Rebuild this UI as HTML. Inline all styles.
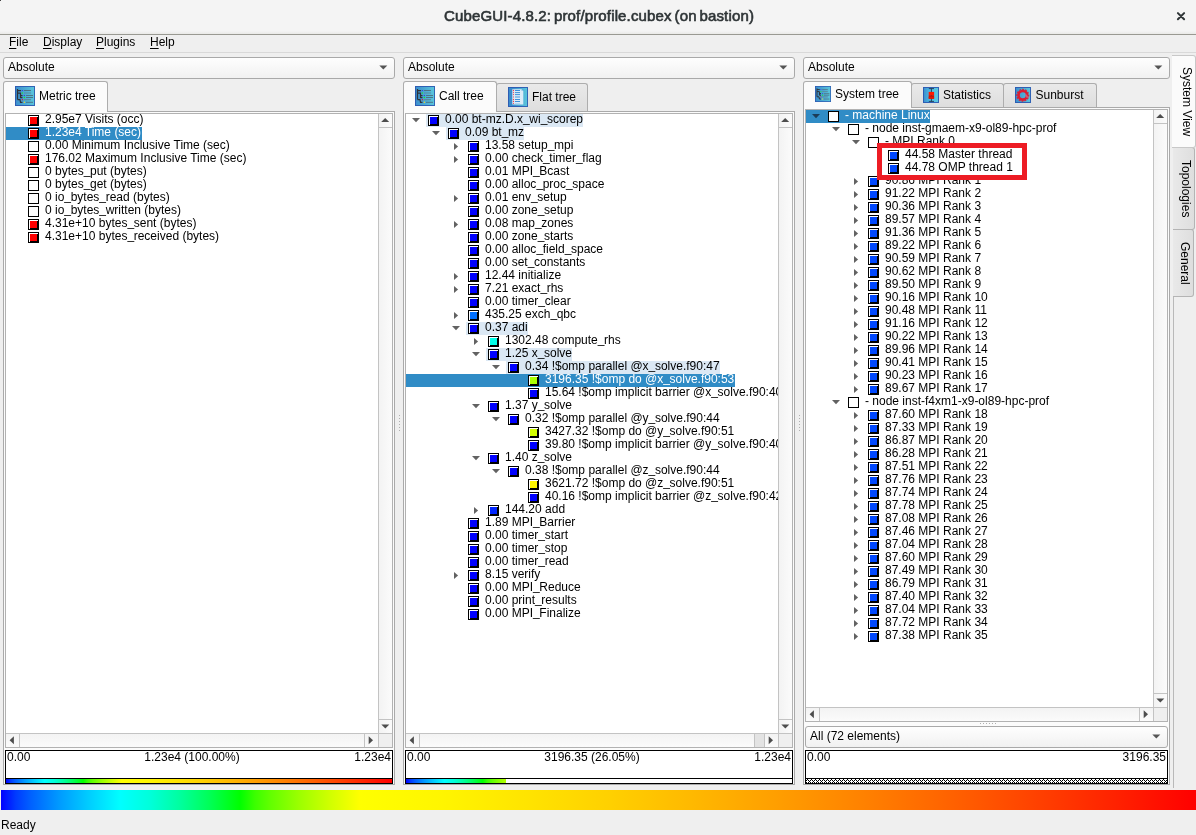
<!DOCTYPE html>
<html><head><meta charset="utf-8"><title>CubeGUI-4.8.2: prof/profile.cubex (on bastion)</title>
<style>
html,body{margin:0;padding:0}
body{width:1196px;height:835px;background:#efefef;font:12px/13px "Liberation Sans",sans-serif;color:#000;overflow:hidden;position:relative}
div,span,i,b,svg{position:absolute;box-sizing:border-box}
i,b{display:block;font-style:normal}
#titlebar{left:0;top:0;width:1196px;height:34px;background:linear-gradient(#f4f4f4 0,#f4f4f4 31px,#e9e9e7 34px)}
#titleline{left:0;top:34px;width:1196px;height:1px;background:#999992}
#title{left:1px;top:6px;width:1196px;text-align:center;font:15px/20px "Liberation Sans",sans-serif;color:#2e3436;letter-spacing:0.15px;word-spacing:-1.5px;-webkit-text-stroke:0.6px #2e3436}
#menuline{left:0;top:52px;width:1196px;height:1px;background:#d9d9d9}
.mi{top:36px;white-space:nowrap}
.mi u{text-decoration:underline;text-underline-offset:2px;text-decoration-thickness:1px}
.combo{height:22px;border:1px solid #a9a9a9;border-radius:3px;background:linear-gradient(#fefefe,#f1f1f1)}
.combo span{left:4px;top:3px;white-space:nowrap}
.combo svg{right:6px;top:7.4px}
.pane{border:1px solid #aaaaaa;background:#fbfbfb}
.frame{border:1px solid #b2b2b2;background:#fff}
.tab{border:1px solid #adadad;border-bottom:none;border-radius:3px 3px 0 0;white-space:nowrap}
.tab.on{background:#fbfbfb}
.tab.off{background:linear-gradient(#e9e9e9,#dedede)}
.tab span{white-space:nowrap}
.vw{border:1px solid #000;background:#fff}
.vw span{top:0px;white-space:nowrap}
.bx{width:11px;height:11px;border:1px solid #000;background:linear-gradient(#fff,#fff) 0 0/9px 1px no-repeat,linear-gradient(#fff,#fff) 0 0/1px 9px no-repeat,#000}
.bx.w{background:#fff}
.bx b{left:1px;top:1px;width:7px;height:7px}
.t{white-space:nowrap;height:13px;line-height:13px;padding:0 1px}
.t em{font-style:normal;position:relative;top:-1px}
.t.sel{background:#308cc6;color:#fff}
.t.hl{background:#dbe8f4}
.selrow{height:13px;background:#308cc6}
.hlrow{height:13px;background:#dbe8f4}
.view{overflow:hidden}
.sbv{background:linear-gradient(90deg,#f3f3f3,#fbfbfb);border-left:1px solid #c3c3c3}
.sbh{background:linear-gradient(#f3f3f3,#fbfbfb);border-top:1px solid #c3c3c3}
.ln{background:#c3c3c3}
.stab{border:1px solid #b4b4b4;border-left:none;border-radius:0 3px 3px 0}
.stab.on{background:#fbfbfb;border-color:#c8c8c8}
.stab.off{background:linear-gradient(90deg,#e9e9e9,#dedede)}
.vt{white-space:nowrap;transform-origin:0 0;transform:rotate(90deg);line-height:13px}
.dot{width:1px;height:1px;background:#b0b0b0}
#root{left:0;top:0;width:1196px;height:835px;will-change:transform}
s{text-decoration:none;position:relative;top:-1px;margin-right:-0.4px}
</style></head><body><div id="root">
<div id="titlebar"></div><i style="left:0;top:0;width:1px;height:1px;background:#444"></i><div id="titleline"></div>
<div id="title">CubeGUI-4.8.2: prof/profile.cubex (on bastion)</div>
<svg style="left:1176px;top:11px" width="10" height="10" viewBox="0 0 10 10"><path d="M1.9 2.1 L8.1 8.3 M8.1 2.1 L1.9 8.3" stroke="#2e3436" stroke-width="2" stroke-linecap="round"/></svg>
<div id="menuline"></div>
<span class="mi" style="left:9px"><u>F</u>ile</span>
<span class="mi" style="left:43px"><u>D</u>isplay</span>
<span class="mi" style="left:96px"><u>P</u>lugins</span>
<span class="mi" style="left:150px"><u>H</u>elp</span>

<!-- PANEL 1 -->
<div class="combo" style="left:3px;top:57px;width:392px"><span>Absolute</span><svg width="9" height="6" viewBox="0 0 9 6"><path d="M0.3 0.6 L8.3 0.6 L4.3 4.6 Z" fill="#555"/></svg></div>
<div class="pane" style="left:3px;top:111px;width:392px;height:674px"></div>
<div class="tab on" style="left:3px;top:81px;width:105px;height:31px"><span style="left:35px;top:8px">Metric tree</span></div>
<div class="frame" style="left:5px;top:113px;width:388px;height:635px"></div>
<div class="view" style="left:6px;top:114px;width:372px;height:619px"><div style="left:-6px;top:-114px">
<i class="bx" style="left:28px;top:115px"><b style="background:#ff0000"></b></i>
<span class="t" style="left:44px;top:114px;padding-right:1px"><em>2.95e7 Visits (occ)</em></span>
<div class="selrow" style="left:6px;top:127px;width:39px"></div>
<i class="bx" style="left:28px;top:128px"><b style="background:#ff0000"></b></i>
<span class="t sel" style="left:44px;top:127px;padding-right:1px"><em>1.23e4 Time (sec)</em></span>
<i class="bx w" style="left:28px;top:141px"></i>
<span class="t" style="left:44px;top:140px;padding-right:1px"><em>0.00 Minimum Inclusive Time (sec)</em></span>
<i class="bx" style="left:28px;top:154px"><b style="background:#ff0000"></b></i>
<span class="t" style="left:44px;top:153px;padding-right:1px"><em>176.02 Maximum Inclusive Time (sec)</em></span>
<i class="bx w" style="left:28px;top:167px"></i>
<span class="t" style="left:44px;top:166px;padding-right:1px"><em>0 bytes<s>_</s>put (bytes)</em></span>
<i class="bx w" style="left:28px;top:180px"></i>
<span class="t" style="left:44px;top:179px;padding-right:1px"><em>0 bytes<s>_</s>get (bytes)</em></span>
<i class="bx w" style="left:28px;top:193px"></i>
<span class="t" style="left:44px;top:192px;padding-right:1px"><em>0 io<s>_</s>bytes<s>_</s>read (bytes)</em></span>
<i class="bx w" style="left:28px;top:206px"></i>
<span class="t" style="left:44px;top:205px;padding-right:1px"><em>0 io<s>_</s>bytes<s>_</s>written (bytes)</em></span>
<i class="bx" style="left:28px;top:219px"><b style="background:#ff0000"></b></i>
<span class="t" style="left:44px;top:218px;padding-right:1px"><em>4.31e+10 bytes<s>_</s>sent (bytes)</em></span>
<i class="bx" style="left:28px;top:232px"><b style="background:#ff0000"></b></i>
<span class="t" style="left:44px;top:231px;padding-right:1px"><em>4.31e+10 bytes<s>_</s>received (bytes)</em></span>
</div></div>
<div class="sbv" style="left:378px;top:114px;width:14px;height:619px"></div>
<div class="ln" style="left:379px;top:127px;width:13px;height:1px"></div>
<div class="ln" style="left:379px;top:719px;width:13px;height:1px"></div>
<svg style="left:381px;top:117px" width="9" height="6" viewBox="0 0 9 6"><path d="M0.2 4.9 L8.2 4.9 L4.2 0.9 Z" fill="#4d4d4d"/></svg>
<svg style="left:381px;top:723.5px" width="9" height="6" viewBox="0 0 9 6"><path d="M0.3 0.6 L8.3 0.6 L4.3 4.6 Z" fill="#4d4d4d"/></svg>
<div class="sbh" style="left:6px;top:733px;width:372px;height:14px"></div>
<div class="ln" style="left:19px;top:734px;width:1px;height:13px"></div>
<div class="ln" style="left:364px;top:734px;width:1px;height:13px"></div>
<svg style="left:9.3px;top:736px" width="6" height="9" viewBox="0 0 6 9"><path d="M4.9 0.3 L4.9 8.3 L0.6 4.3 Z" fill="#4d4d4d"/></svg>
<svg style="left:368px;top:736px" width="6" height="9" viewBox="0 0 6 9"><path d="M0.7 0.3 L0.7 8.3 L5 4.3 Z" fill="#4d4d4d"/></svg>
<div style="left:378px;top:733px;width:14px;height:14px;background:#efefef;border-left:1px solid #c3c3c3;border-top:1px solid #c3c3c3"></div>
<div class="vw" style="left:5px;top:750px;width:388px;height:34px"><span style="left:1px">0.00</span><span style="left:-7px;width:386px;text-align:center">1.23e4 (100.00%)</span><span style="right:1px">1.23e4</span>
<div style="left:0;top:27px;width:386px;height:1px;background:#000"></div>
<div style="left:0;top:28px;width:386px;height:4px;background:linear-gradient(90deg,#0000ff 0.00%,#003bff 1.25%,#0061ff 2.50%,#009dff 5.00%,#00d0ff 7.50%,#00ffff 10.00%,#00ffda 12.50%,#00ff9e 15.00%,#00ff55 17.50%,#00ff00 20.00%,#3bff00 21.25%,#61ff00 22.50%,#9dff00 25.00%,#d0ff00 27.50%,#ffff00 30.00%,#fff500 37.00%,#ffe400 44.00%,#ffd000 51.00%,#ffb800 58.00%,#ff9e00 65.00%,#ff8200 72.00%,#ff6400 79.00%,#ff4400 86.00%,#ff2300 93.00%,#ff0000 100.00%)"></div></div>

<!-- PANEL 2 -->
<div class="combo" style="left:403px;top:57px;width:392px"><span>Absolute</span><svg width="9" height="6" viewBox="0 0 9 6"><path d="M0.3 0.6 L8.3 0.6 L4.3 4.6 Z" fill="#555"/></svg></div>
<div class="pane" style="left:403px;top:111px;width:392px;height:674px"></div>
<div class="tab off" style="left:496px;top:83px;width:92px;height:28px"><span style="left:35px;top:7px">Flat tree</span></div>
<div class="tab on" style="left:403px;top:81px;width:94px;height:31px"><span style="left:35px;top:8px">Call tree</span></div>
<div class="frame" style="left:405px;top:113px;width:388px;height:635px"></div>
<div class="view" style="left:406px;top:114px;width:372px;height:619px"><div style="left:-406px;top:-114px">
<div class="hlrow" style="left:426px;top:114px;width:18px"></div>
<svg class="ar" style="left:412px;top:118px" width="9" height="6" viewBox="0 0 9 6"><path d="M0 0.1 L8 0.1 L4 4.2 Z" fill="#626262"/></svg>
<i class="bx" style="left:428px;top:115px"><b style="background:#0000ff"></b></i>
<span class="t hl" style="left:444px;top:114px;padding-right:0px"><em>0.00 bt-mz.D.x<s>_</s>wi<s>_</s>scorep</em></span>
<div class="hlrow" style="left:446px;top:127px;width:18px"></div>
<svg class="ar" style="left:432px;top:131px" width="9" height="6" viewBox="0 0 9 6"><path d="M0 0.1 L8 0.1 L4 4.2 Z" fill="#626262"/></svg>
<i class="bx" style="left:448px;top:128px"><b style="background:#0000ff"></b></i>
<span class="t hl" style="left:464px;top:127px;padding-right:0px"><em>0.09 bt<s>_</s>mz</em></span>
<svg class="ar" style="left:454px;top:142px" width="6" height="9" viewBox="0 0 6 9"><path d="M0 0.9 L0 8.1 L4.1 4.5 Z" fill="#626262"/></svg>
<i class="bx" style="left:468px;top:141px"><b style="background:#0000ff"></b></i>
<span class="t" style="left:484px;top:140px;padding-right:0px"><em>13.58 setup<s>_</s>mpi</em></span>
<svg class="ar" style="left:454px;top:155px" width="6" height="9" viewBox="0 0 6 9"><path d="M0 0.9 L0 8.1 L4.1 4.5 Z" fill="#626262"/></svg>
<i class="bx" style="left:468px;top:154px"><b style="background:#0000ff"></b></i>
<span class="t" style="left:484px;top:153px;padding-right:0px"><em>0.00 check<s>_</s>timer<s>_</s>flag</em></span>
<i class="bx" style="left:468px;top:167px"><b style="background:#0000ff"></b></i>
<span class="t" style="left:484px;top:166px;padding-right:0px"><em>0.01 MPI<s>_</s>Bcast</em></span>
<i class="bx" style="left:468px;top:180px"><b style="background:#0000ff"></b></i>
<span class="t" style="left:484px;top:179px;padding-right:0px"><em>0.00 alloc<s>_</s>proc<s>_</s>space</em></span>
<svg class="ar" style="left:454px;top:194px" width="6" height="9" viewBox="0 0 6 9"><path d="M0 0.9 L0 8.1 L4.1 4.5 Z" fill="#626262"/></svg>
<i class="bx" style="left:468px;top:193px"><b style="background:#0000ff"></b></i>
<span class="t" style="left:484px;top:192px;padding-right:0px"><em>0.01 env<s>_</s>setup</em></span>
<i class="bx" style="left:468px;top:206px"><b style="background:#0000ff"></b></i>
<span class="t" style="left:484px;top:205px;padding-right:0px"><em>0.00 zone<s>_</s>setup</em></span>
<svg class="ar" style="left:454px;top:220px" width="6" height="9" viewBox="0 0 6 9"><path d="M0 0.9 L0 8.1 L4.1 4.5 Z" fill="#626262"/></svg>
<i class="bx" style="left:468px;top:219px"><b style="background:#0000ff"></b></i>
<span class="t" style="left:484px;top:218px;padding-right:0px"><em>0.08 map<s>_</s>zones</em></span>
<i class="bx" style="left:468px;top:232px"><b style="background:#0000ff"></b></i>
<span class="t" style="left:484px;top:231px;padding-right:0px"><em>0.00 zone<s>_</s>starts</em></span>
<i class="bx" style="left:468px;top:245px"><b style="background:#0000ff"></b></i>
<span class="t" style="left:484px;top:244px;padding-right:0px"><em>0.00 alloc<s>_</s>field<s>_</s>space</em></span>
<i class="bx" style="left:468px;top:258px"><b style="background:#0000ff"></b></i>
<span class="t" style="left:484px;top:257px;padding-right:0px"><em>0.00 set<s>_</s>constants</em></span>
<svg class="ar" style="left:454px;top:272px" width="6" height="9" viewBox="0 0 6 9"><path d="M0 0.9 L0 8.1 L4.1 4.5 Z" fill="#626262"/></svg>
<i class="bx" style="left:468px;top:271px"><b style="background:#0000ff"></b></i>
<span class="t" style="left:484px;top:270px;padding-right:0px"><em>12.44 initialize</em></span>
<svg class="ar" style="left:454px;top:285px" width="6" height="9" viewBox="0 0 6 9"><path d="M0 0.9 L0 8.1 L4.1 4.5 Z" fill="#626262"/></svg>
<i class="bx" style="left:468px;top:284px"><b style="background:#0000ff"></b></i>
<span class="t" style="left:484px;top:283px;padding-right:0px"><em>7.21 exact<s>_</s>rhs</em></span>
<i class="bx" style="left:468px;top:297px"><b style="background:#0000ff"></b></i>
<span class="t" style="left:484px;top:296px;padding-right:0px"><em>0.00 timer<s>_</s>clear</em></span>
<svg class="ar" style="left:454px;top:311px" width="6" height="9" viewBox="0 0 6 9"><path d="M0 0.9 L0 8.1 L4.1 4.5 Z" fill="#626262"/></svg>
<i class="bx" style="left:468px;top:310px"><b style="background:#0070ff"></b></i>
<span class="t" style="left:484px;top:309px;padding-right:0px"><em>435.25 exch<s>_</s>qbc</em></span>
<div class="hlrow" style="left:466px;top:322px;width:18px"></div>
<svg class="ar" style="left:452px;top:326px" width="9" height="6" viewBox="0 0 9 6"><path d="M0 0.1 L8 0.1 L4 4.2 Z" fill="#626262"/></svg>
<i class="bx" style="left:468px;top:323px"><b style="background:#0000ff"></b></i>
<span class="t hl" style="left:484px;top:322px;padding-right:0px"><em>0.37 adi</em></span>
<svg class="ar" style="left:474px;top:337px" width="6" height="9" viewBox="0 0 6 9"><path d="M0 0.9 L0 8.1 L4.1 4.5 Z" fill="#626262"/></svg>
<i class="bx" style="left:488px;top:336px"><b style="background:#00ffea"></b></i>
<span class="t" style="left:504px;top:335px;padding-right:0px"><em>1302.48 compute<s>_</s>rhs</em></span>
<div class="hlrow" style="left:486px;top:348px;width:18px"></div>
<svg class="ar" style="left:472px;top:352px" width="9" height="6" viewBox="0 0 9 6"><path d="M0 0.1 L8 0.1 L4 4.2 Z" fill="#626262"/></svg>
<i class="bx" style="left:488px;top:349px"><b style="background:#0000ff"></b></i>
<span class="t hl" style="left:504px;top:348px;padding-right:0px"><em>1.25 x<s>_</s>solve</em></span>
<div class="hlrow" style="left:506px;top:361px;width:18px"></div>
<svg class="ar" style="left:492px;top:365px" width="9" height="6" viewBox="0 0 9 6"><path d="M0 0.1 L8 0.1 L4 4.2 Z" fill="#626262"/></svg>
<i class="bx" style="left:508px;top:362px"><b style="background:#0000ff"></b></i>
<span class="t hl" style="left:524px;top:361px;padding-right:0px"><em>0.34 !$omp parallel @x<s>_</s>solve.f90:47</em></span>
<div class="selrow" style="left:406px;top:374px;width:139px"></div>
<i class="bx" style="left:528px;top:375px"><b style="background:#aaff00"></b></i>
<span class="t sel" style="left:544px;top:374px;padding-right:1px"><em>3196.35 !$omp do @x<s>_</s>solve.f90:53</em></span>
<i class="bx" style="left:528px;top:388px"><b style="background:#0000ff"></b></i>
<span class="t" style="left:544px;top:387px;padding-right:0px"><em>15.64 !$omp implicit barrier @x<s>_</s>solve.f90:40</em></span>
<svg class="ar" style="left:472px;top:404px" width="9" height="6" viewBox="0 0 9 6"><path d="M0 0.1 L8 0.1 L4 4.2 Z" fill="#626262"/></svg>
<i class="bx" style="left:488px;top:401px"><b style="background:#0000ff"></b></i>
<span class="t" style="left:504px;top:400px;padding-right:0px"><em>1.37 y<s>_</s>solve</em></span>
<svg class="ar" style="left:492px;top:417px" width="9" height="6" viewBox="0 0 9 6"><path d="M0 0.1 L8 0.1 L4 4.2 Z" fill="#626262"/></svg>
<i class="bx" style="left:508px;top:414px"><b style="background:#0000ff"></b></i>
<span class="t" style="left:524px;top:413px;padding-right:0px"><em>0.32 !$omp parallel @y<s>_</s>solve.f90:44</em></span>
<i class="bx" style="left:528px;top:427px"><b style="background:#d4ff00"></b></i>
<span class="t" style="left:544px;top:426px;padding-right:0px"><em>3427.32 !$omp do @y<s>_</s>solve.f90:51</em></span>
<i class="bx" style="left:528px;top:440px"><b style="background:#0000ff"></b></i>
<span class="t" style="left:544px;top:439px;padding-right:0px"><em>39.80 !$omp implicit barrier @y<s>_</s>solve.f90:40</em></span>
<svg class="ar" style="left:472px;top:456px" width="9" height="6" viewBox="0 0 9 6"><path d="M0 0.1 L8 0.1 L4 4.2 Z" fill="#626262"/></svg>
<i class="bx" style="left:488px;top:453px"><b style="background:#0000ff"></b></i>
<span class="t" style="left:504px;top:452px;padding-right:0px"><em>1.40 z<s>_</s>solve</em></span>
<svg class="ar" style="left:492px;top:469px" width="9" height="6" viewBox="0 0 9 6"><path d="M0 0.1 L8 0.1 L4 4.2 Z" fill="#626262"/></svg>
<i class="bx" style="left:508px;top:466px"><b style="background:#0000ff"></b></i>
<span class="t" style="left:524px;top:465px;padding-right:0px"><em>0.38 !$omp parallel @z<s>_</s>solve.f90:44</em></span>
<i class="bx" style="left:528px;top:479px"><b style="background:#fff700"></b></i>
<span class="t" style="left:544px;top:478px;padding-right:0px"><em>3621.72 !$omp do @z<s>_</s>solve.f90:51</em></span>
<i class="bx" style="left:528px;top:492px"><b style="background:#0000ff"></b></i>
<span class="t" style="left:544px;top:491px;padding-right:0px"><em>40.16 !$omp implicit barrier @z<s>_</s>solve.f90:42</em></span>
<svg class="ar" style="left:474px;top:506px" width="6" height="9" viewBox="0 0 6 9"><path d="M0 0.9 L0 8.1 L4.1 4.5 Z" fill="#626262"/></svg>
<i class="bx" style="left:488px;top:505px"><b style="background:#0025ff"></b></i>
<span class="t" style="left:504px;top:504px;padding-right:0px"><em>144.20 add</em></span>
<i class="bx" style="left:468px;top:518px"><b style="background:#0000ff"></b></i>
<span class="t" style="left:484px;top:517px;padding-right:0px"><em>1.89 MPI<s>_</s>Barrier</em></span>
<i class="bx" style="left:468px;top:531px"><b style="background:#0000ff"></b></i>
<span class="t" style="left:484px;top:530px;padding-right:0px"><em>0.00 timer<s>_</s>start</em></span>
<i class="bx" style="left:468px;top:544px"><b style="background:#0000ff"></b></i>
<span class="t" style="left:484px;top:543px;padding-right:0px"><em>0.00 timer<s>_</s>stop</em></span>
<i class="bx" style="left:468px;top:557px"><b style="background:#0000ff"></b></i>
<span class="t" style="left:484px;top:556px;padding-right:0px"><em>0.00 timer<s>_</s>read</em></span>
<svg class="ar" style="left:454px;top:571px" width="6" height="9" viewBox="0 0 6 9"><path d="M0 0.9 L0 8.1 L4.1 4.5 Z" fill="#626262"/></svg>
<i class="bx" style="left:468px;top:570px"><b style="background:#0000ff"></b></i>
<span class="t" style="left:484px;top:569px;padding-right:0px"><em>8.15 verify</em></span>
<i class="bx" style="left:468px;top:583px"><b style="background:#0000ff"></b></i>
<span class="t" style="left:484px;top:582px;padding-right:0px"><em>0.00 MPI<s>_</s>Reduce</em></span>
<i class="bx" style="left:468px;top:596px"><b style="background:#0000ff"></b></i>
<span class="t" style="left:484px;top:595px;padding-right:0px"><em>0.00 print<s>_</s>results</em></span>
<i class="bx" style="left:468px;top:609px"><b style="background:#0000ff"></b></i>
<span class="t" style="left:484px;top:608px;padding-right:0px"><em>0.00 MPI<s>_</s>Finalize</em></span>
</div></div>
<div class="sbv" style="left:778px;top:114px;width:14px;height:619px"></div>
<div class="ln" style="left:779px;top:127px;width:13px;height:1px"></div>
<div class="ln" style="left:779px;top:719px;width:13px;height:1px"></div>
<svg style="left:781px;top:117px" width="9" height="6" viewBox="0 0 9 6"><path d="M0.2 4.9 L8.2 4.9 L4.2 0.9 Z" fill="#4d4d4d"/></svg>
<svg style="left:781px;top:723.5px" width="9" height="6" viewBox="0 0 9 6"><path d="M0.3 0.6 L8.3 0.6 L4.3 4.6 Z" fill="#4d4d4d"/></svg>
<div class="sbh" style="left:406px;top:733px;width:372px;height:14px"></div>
<div class="ln" style="left:419px;top:734px;width:1px;height:13px"></div>
<div class="ln" style="left:764px;top:734px;width:1px;height:13px"></div>
<div style="left:754px;top:734px;width:10px;height:13px;background:#e3e3e3;border-left:1px solid #c3c3c3"></div>
<svg style="left:409.3px;top:736px" width="6" height="9" viewBox="0 0 6 9"><path d="M4.9 0.3 L4.9 8.3 L0.6 4.3 Z" fill="#4d4d4d"/></svg>
<svg style="left:768px;top:736px" width="6" height="9" viewBox="0 0 6 9"><path d="M0.7 0.3 L0.7 8.3 L5 4.3 Z" fill="#4d4d4d"/></svg>
<div style="left:778px;top:733px;width:14px;height:14px;background:#efefef;border-left:1px solid #c3c3c3;border-top:1px solid #c3c3c3"></div>
<div class="vw" style="left:405px;top:750px;width:388px;height:34px"><span style="left:1px">0.00</span><span style="left:-7px;width:386px;text-align:center">3196.35 (26.05%)</span><span style="right:1px">1.23e4</span>
<div style="left:0;top:27px;width:386px;height:1px;background:#000"></div>
<div style="left:0;top:28px;width:100px;height:4px;background:linear-gradient(90deg,#0000ff 0.00%,#003bff 4.80%,#0061ff 9.60%,#009dff 19.19%,#00d0ff 28.79%,#00ffff 38.39%,#00ffda 47.98%,#00ff9e 57.58%,#00ff55 67.18%,#00ff00 76.78%,#3bff00 81.57%,#61ff00 86.37%,#9dff00 95.97%,#b3ff00 100.00%)"></div></div>

<!-- PANEL 3 -->
<div class="combo" style="left:803px;top:57px;width:367px"><span>Absolute</span><svg width="9" height="6" viewBox="0 0 9 6"><path d="M0.3 0.6 L8.3 0.6 L4.3 4.6 Z" fill="#555"/></svg></div>
<div class="pane" style="left:803px;top:107px;width:367px;height:678px"></div>
<div class="tab off" style="left:911px;top:83px;width:93px;height:24px"><span style="left:31px;top:5px">Statistics</span></div>
<div class="tab off" style="left:1003px;top:83px;width:94px;height:24px"><span style="left:31.5px;top:5px">Sunburst</span></div>
<div class="tab on" style="left:803px;top:81px;width:109px;height:27px"><span style="left:31px;top:6px">System tree</span></div>
<div class="frame" style="left:805px;top:109px;width:363px;height:613px"></div>
<div class="view" style="left:806px;top:110px;width:347px;height:597px"><div style="left:-806px;top:-110px">
<div class="selrow" style="left:806px;top:110px;width:39px"></div>
<svg class="ar" style="left:812px;top:114px" width="9" height="6" viewBox="0 0 9 6"><path d="M0 0.1 L8 0.1 L4 4.2 Z" fill="#1c3c58"/></svg>
<i class="bx w" style="left:828px;top:111px"></i>
<span class="t sel" style="left:844px;top:110px;padding-right:0px"><em>- machine Linux</em></span>
<svg class="ar" style="left:832px;top:127px" width="9" height="6" viewBox="0 0 9 6"><path d="M0 0.1 L8 0.1 L4 4.2 Z" fill="#626262"/></svg>
<i class="bx w" style="left:848px;top:124px"></i>
<span class="t" style="left:864px;top:123px;padding-right:0px"><em>- node inst-gmaem-x9-ol89-hpc-prof</em></span>
<svg class="ar" style="left:852px;top:140px" width="9" height="6" viewBox="0 0 9 6"><path d="M0 0.1 L8 0.1 L4 4.2 Z" fill="#626262"/></svg>
<i class="bx w" style="left:868px;top:137px"></i>
<span class="t" style="left:884px;top:136px;padding-right:0px"><em>- MPI Rank 0</em></span>
<i class="bx" style="left:888px;top:150px"><b style="background:#0048ff"></b></i>
<span class="t" style="left:904px;top:149px;padding-right:0px"><em>44.58 Master thread</em></span>
<i class="bx" style="left:888px;top:163px"><b style="background:#0048ff"></b></i>
<span class="t" style="left:904px;top:162px;padding-right:0px"><em>44.78 OMP thread 1</em></span>
<svg class="ar" style="left:854px;top:177px" width="6" height="9" viewBox="0 0 6 9"><path d="M0 0.9 L0 8.1 L4.1 4.5 Z" fill="#626262"/></svg>
<i class="bx" style="left:868px;top:176px"><b style="background:#0048ff"></b></i>
<span class="t" style="left:884px;top:175px;padding-right:0px"><em>90.86 MPI Rank 1</em></span>
<svg class="ar" style="left:854px;top:190px" width="6" height="9" viewBox="0 0 6 9"><path d="M0 0.9 L0 8.1 L4.1 4.5 Z" fill="#626262"/></svg>
<i class="bx" style="left:868px;top:189px"><b style="background:#0048ff"></b></i>
<span class="t" style="left:884px;top:188px;padding-right:0px"><em>91.22 MPI Rank 2</em></span>
<svg class="ar" style="left:854px;top:203px" width="6" height="9" viewBox="0 0 6 9"><path d="M0 0.9 L0 8.1 L4.1 4.5 Z" fill="#626262"/></svg>
<i class="bx" style="left:868px;top:202px"><b style="background:#0048ff"></b></i>
<span class="t" style="left:884px;top:201px;padding-right:0px"><em>90.36 MPI Rank 3</em></span>
<svg class="ar" style="left:854px;top:216px" width="6" height="9" viewBox="0 0 6 9"><path d="M0 0.9 L0 8.1 L4.1 4.5 Z" fill="#626262"/></svg>
<i class="bx" style="left:868px;top:215px"><b style="background:#0048ff"></b></i>
<span class="t" style="left:884px;top:214px;padding-right:0px"><em>89.57 MPI Rank 4</em></span>
<svg class="ar" style="left:854px;top:229px" width="6" height="9" viewBox="0 0 6 9"><path d="M0 0.9 L0 8.1 L4.1 4.5 Z" fill="#626262"/></svg>
<i class="bx" style="left:868px;top:228px"><b style="background:#0048ff"></b></i>
<span class="t" style="left:884px;top:227px;padding-right:0px"><em>91.36 MPI Rank 5</em></span>
<svg class="ar" style="left:854px;top:242px" width="6" height="9" viewBox="0 0 6 9"><path d="M0 0.9 L0 8.1 L4.1 4.5 Z" fill="#626262"/></svg>
<i class="bx" style="left:868px;top:241px"><b style="background:#0048ff"></b></i>
<span class="t" style="left:884px;top:240px;padding-right:0px"><em>89.22 MPI Rank 6</em></span>
<svg class="ar" style="left:854px;top:255px" width="6" height="9" viewBox="0 0 6 9"><path d="M0 0.9 L0 8.1 L4.1 4.5 Z" fill="#626262"/></svg>
<i class="bx" style="left:868px;top:254px"><b style="background:#0048ff"></b></i>
<span class="t" style="left:884px;top:253px;padding-right:0px"><em>90.59 MPI Rank 7</em></span>
<svg class="ar" style="left:854px;top:268px" width="6" height="9" viewBox="0 0 6 9"><path d="M0 0.9 L0 8.1 L4.1 4.5 Z" fill="#626262"/></svg>
<i class="bx" style="left:868px;top:267px"><b style="background:#0048ff"></b></i>
<span class="t" style="left:884px;top:266px;padding-right:0px"><em>90.62 MPI Rank 8</em></span>
<svg class="ar" style="left:854px;top:281px" width="6" height="9" viewBox="0 0 6 9"><path d="M0 0.9 L0 8.1 L4.1 4.5 Z" fill="#626262"/></svg>
<i class="bx" style="left:868px;top:280px"><b style="background:#0048ff"></b></i>
<span class="t" style="left:884px;top:279px;padding-right:0px"><em>89.50 MPI Rank 9</em></span>
<svg class="ar" style="left:854px;top:294px" width="6" height="9" viewBox="0 0 6 9"><path d="M0 0.9 L0 8.1 L4.1 4.5 Z" fill="#626262"/></svg>
<i class="bx" style="left:868px;top:293px"><b style="background:#0048ff"></b></i>
<span class="t" style="left:884px;top:292px;padding-right:0px"><em>90.16 MPI Rank 10</em></span>
<svg class="ar" style="left:854px;top:307px" width="6" height="9" viewBox="0 0 6 9"><path d="M0 0.9 L0 8.1 L4.1 4.5 Z" fill="#626262"/></svg>
<i class="bx" style="left:868px;top:306px"><b style="background:#0048ff"></b></i>
<span class="t" style="left:884px;top:305px;padding-right:0px"><em>90.48 MPI Rank 11</em></span>
<svg class="ar" style="left:854px;top:320px" width="6" height="9" viewBox="0 0 6 9"><path d="M0 0.9 L0 8.1 L4.1 4.5 Z" fill="#626262"/></svg>
<i class="bx" style="left:868px;top:319px"><b style="background:#0048ff"></b></i>
<span class="t" style="left:884px;top:318px;padding-right:0px"><em>91.16 MPI Rank 12</em></span>
<svg class="ar" style="left:854px;top:333px" width="6" height="9" viewBox="0 0 6 9"><path d="M0 0.9 L0 8.1 L4.1 4.5 Z" fill="#626262"/></svg>
<i class="bx" style="left:868px;top:332px"><b style="background:#0048ff"></b></i>
<span class="t" style="left:884px;top:331px;padding-right:0px"><em>90.22 MPI Rank 13</em></span>
<svg class="ar" style="left:854px;top:346px" width="6" height="9" viewBox="0 0 6 9"><path d="M0 0.9 L0 8.1 L4.1 4.5 Z" fill="#626262"/></svg>
<i class="bx" style="left:868px;top:345px"><b style="background:#0048ff"></b></i>
<span class="t" style="left:884px;top:344px;padding-right:0px"><em>89.96 MPI Rank 14</em></span>
<svg class="ar" style="left:854px;top:359px" width="6" height="9" viewBox="0 0 6 9"><path d="M0 0.9 L0 8.1 L4.1 4.5 Z" fill="#626262"/></svg>
<i class="bx" style="left:868px;top:358px"><b style="background:#0048ff"></b></i>
<span class="t" style="left:884px;top:357px;padding-right:0px"><em>90.41 MPI Rank 15</em></span>
<svg class="ar" style="left:854px;top:372px" width="6" height="9" viewBox="0 0 6 9"><path d="M0 0.9 L0 8.1 L4.1 4.5 Z" fill="#626262"/></svg>
<i class="bx" style="left:868px;top:371px"><b style="background:#0048ff"></b></i>
<span class="t" style="left:884px;top:370px;padding-right:0px"><em>90.23 MPI Rank 16</em></span>
<svg class="ar" style="left:854px;top:385px" width="6" height="9" viewBox="0 0 6 9"><path d="M0 0.9 L0 8.1 L4.1 4.5 Z" fill="#626262"/></svg>
<i class="bx" style="left:868px;top:384px"><b style="background:#0048ff"></b></i>
<span class="t" style="left:884px;top:383px;padding-right:0px"><em>89.67 MPI Rank 17</em></span>
<svg class="ar" style="left:832px;top:400px" width="9" height="6" viewBox="0 0 9 6"><path d="M0 0.1 L8 0.1 L4 4.2 Z" fill="#626262"/></svg>
<i class="bx w" style="left:848px;top:397px"></i>
<span class="t" style="left:864px;top:396px;padding-right:0px"><em>- node inst-f4xm1-x9-ol89-hpc-prof</em></span>
<svg class="ar" style="left:854px;top:411px" width="6" height="9" viewBox="0 0 6 9"><path d="M0 0.9 L0 8.1 L4.1 4.5 Z" fill="#626262"/></svg>
<i class="bx" style="left:868px;top:410px"><b style="background:#0048ff"></b></i>
<span class="t" style="left:884px;top:409px;padding-right:0px"><em>87.60 MPI Rank 18</em></span>
<svg class="ar" style="left:854px;top:424px" width="6" height="9" viewBox="0 0 6 9"><path d="M0 0.9 L0 8.1 L4.1 4.5 Z" fill="#626262"/></svg>
<i class="bx" style="left:868px;top:423px"><b style="background:#0048ff"></b></i>
<span class="t" style="left:884px;top:422px;padding-right:0px"><em>87.33 MPI Rank 19</em></span>
<svg class="ar" style="left:854px;top:437px" width="6" height="9" viewBox="0 0 6 9"><path d="M0 0.9 L0 8.1 L4.1 4.5 Z" fill="#626262"/></svg>
<i class="bx" style="left:868px;top:436px"><b style="background:#0048ff"></b></i>
<span class="t" style="left:884px;top:435px;padding-right:0px"><em>86.87 MPI Rank 20</em></span>
<svg class="ar" style="left:854px;top:450px" width="6" height="9" viewBox="0 0 6 9"><path d="M0 0.9 L0 8.1 L4.1 4.5 Z" fill="#626262"/></svg>
<i class="bx" style="left:868px;top:449px"><b style="background:#0048ff"></b></i>
<span class="t" style="left:884px;top:448px;padding-right:0px"><em>86.28 MPI Rank 21</em></span>
<svg class="ar" style="left:854px;top:463px" width="6" height="9" viewBox="0 0 6 9"><path d="M0 0.9 L0 8.1 L4.1 4.5 Z" fill="#626262"/></svg>
<i class="bx" style="left:868px;top:462px"><b style="background:#0048ff"></b></i>
<span class="t" style="left:884px;top:461px;padding-right:0px"><em>87.51 MPI Rank 22</em></span>
<svg class="ar" style="left:854px;top:476px" width="6" height="9" viewBox="0 0 6 9"><path d="M0 0.9 L0 8.1 L4.1 4.5 Z" fill="#626262"/></svg>
<i class="bx" style="left:868px;top:475px"><b style="background:#0048ff"></b></i>
<span class="t" style="left:884px;top:474px;padding-right:0px"><em>87.76 MPI Rank 23</em></span>
<svg class="ar" style="left:854px;top:489px" width="6" height="9" viewBox="0 0 6 9"><path d="M0 0.9 L0 8.1 L4.1 4.5 Z" fill="#626262"/></svg>
<i class="bx" style="left:868px;top:488px"><b style="background:#0048ff"></b></i>
<span class="t" style="left:884px;top:487px;padding-right:0px"><em>87.74 MPI Rank 24</em></span>
<svg class="ar" style="left:854px;top:502px" width="6" height="9" viewBox="0 0 6 9"><path d="M0 0.9 L0 8.1 L4.1 4.5 Z" fill="#626262"/></svg>
<i class="bx" style="left:868px;top:501px"><b style="background:#0048ff"></b></i>
<span class="t" style="left:884px;top:500px;padding-right:0px"><em>87.78 MPI Rank 25</em></span>
<svg class="ar" style="left:854px;top:515px" width="6" height="9" viewBox="0 0 6 9"><path d="M0 0.9 L0 8.1 L4.1 4.5 Z" fill="#626262"/></svg>
<i class="bx" style="left:868px;top:514px"><b style="background:#0048ff"></b></i>
<span class="t" style="left:884px;top:513px;padding-right:0px"><em>87.08 MPI Rank 26</em></span>
<svg class="ar" style="left:854px;top:528px" width="6" height="9" viewBox="0 0 6 9"><path d="M0 0.9 L0 8.1 L4.1 4.5 Z" fill="#626262"/></svg>
<i class="bx" style="left:868px;top:527px"><b style="background:#0048ff"></b></i>
<span class="t" style="left:884px;top:526px;padding-right:0px"><em>87.46 MPI Rank 27</em></span>
<svg class="ar" style="left:854px;top:541px" width="6" height="9" viewBox="0 0 6 9"><path d="M0 0.9 L0 8.1 L4.1 4.5 Z" fill="#626262"/></svg>
<i class="bx" style="left:868px;top:540px"><b style="background:#0048ff"></b></i>
<span class="t" style="left:884px;top:539px;padding-right:0px"><em>87.04 MPI Rank 28</em></span>
<svg class="ar" style="left:854px;top:554px" width="6" height="9" viewBox="0 0 6 9"><path d="M0 0.9 L0 8.1 L4.1 4.5 Z" fill="#626262"/></svg>
<i class="bx" style="left:868px;top:553px"><b style="background:#0048ff"></b></i>
<span class="t" style="left:884px;top:552px;padding-right:0px"><em>87.60 MPI Rank 29</em></span>
<svg class="ar" style="left:854px;top:567px" width="6" height="9" viewBox="0 0 6 9"><path d="M0 0.9 L0 8.1 L4.1 4.5 Z" fill="#626262"/></svg>
<i class="bx" style="left:868px;top:566px"><b style="background:#0048ff"></b></i>
<span class="t" style="left:884px;top:565px;padding-right:0px"><em>87.49 MPI Rank 30</em></span>
<svg class="ar" style="left:854px;top:580px" width="6" height="9" viewBox="0 0 6 9"><path d="M0 0.9 L0 8.1 L4.1 4.5 Z" fill="#626262"/></svg>
<i class="bx" style="left:868px;top:579px"><b style="background:#0048ff"></b></i>
<span class="t" style="left:884px;top:578px;padding-right:0px"><em>86.79 MPI Rank 31</em></span>
<svg class="ar" style="left:854px;top:593px" width="6" height="9" viewBox="0 0 6 9"><path d="M0 0.9 L0 8.1 L4.1 4.5 Z" fill="#626262"/></svg>
<i class="bx" style="left:868px;top:592px"><b style="background:#0048ff"></b></i>
<span class="t" style="left:884px;top:591px;padding-right:0px"><em>87.40 MPI Rank 32</em></span>
<svg class="ar" style="left:854px;top:606px" width="6" height="9" viewBox="0 0 6 9"><path d="M0 0.9 L0 8.1 L4.1 4.5 Z" fill="#626262"/></svg>
<i class="bx" style="left:868px;top:605px"><b style="background:#0048ff"></b></i>
<span class="t" style="left:884px;top:604px;padding-right:0px"><em>87.04 MPI Rank 33</em></span>
<svg class="ar" style="left:854px;top:619px" width="6" height="9" viewBox="0 0 6 9"><path d="M0 0.9 L0 8.1 L4.1 4.5 Z" fill="#626262"/></svg>
<i class="bx" style="left:868px;top:618px"><b style="background:#0048ff"></b></i>
<span class="t" style="left:884px;top:617px;padding-right:0px"><em>87.72 MPI Rank 34</em></span>
<svg class="ar" style="left:854px;top:632px" width="6" height="9" viewBox="0 0 6 9"><path d="M0 0.9 L0 8.1 L4.1 4.5 Z" fill="#626262"/></svg>
<i class="bx" style="left:868px;top:631px"><b style="background:#0048ff"></b></i>
<span class="t" style="left:884px;top:630px;padding-right:0px"><em>87.38 MPI Rank 35</em></span>
</div></div>
<div class="sbv" style="left:1153px;top:110px;width:14px;height:597px"></div>
<div class="ln" style="left:1154px;top:123px;width:13px;height:1px"></div>
<div class="ln" style="left:1154px;top:693px;width:13px;height:1px"></div>
<svg style="left:1156px;top:113px" width="9" height="6" viewBox="0 0 9 6"><path d="M0.2 4.9 L8.2 4.9 L4.2 0.9 Z" fill="#4d4d4d"/></svg>
<svg style="left:1156px;top:697.5px" width="9" height="6" viewBox="0 0 9 6"><path d="M0.3 0.6 L8.3 0.6 L4.3 4.6 Z" fill="#4d4d4d"/></svg>
<div class="sbh" style="left:806px;top:707px;width:347px;height:14px"></div>
<div class="ln" style="left:819px;top:708px;width:1px;height:13px"></div>
<div class="ln" style="left:1139px;top:708px;width:1px;height:13px"></div>
<svg style="left:809.3px;top:710px" width="6" height="9" viewBox="0 0 6 9"><path d="M4.9 0.3 L4.9 8.3 L0.6 4.3 Z" fill="#4d4d4d"/></svg>
<svg style="left:1143px;top:710px" width="6" height="9" viewBox="0 0 6 9"><path d="M0.7 0.3 L0.7 8.3 L5 4.3 Z" fill="#4d4d4d"/></svg>
<div style="left:1153px;top:707px;width:14px;height:14px;background:#efefef;border-left:1px solid #c3c3c3;border-top:1px solid #c3c3c3"></div>
<div class="combo" style="left:805px;top:726px;width:363px"><span>All (72 elements)</span><svg width="9" height="6" viewBox="0 0 9 6"><path d="M0.3 0.6 L8.3 0.6 L4.3 4.6 Z" fill="#555"/></svg></div>
<div class="vw" style="left:805px;top:750px;width:363px;height:34px"><span style="left:1px">0.00</span><span style="right:1px">3196.35</span>
<div style="left:0;top:27px;width:361px;height:1px;background:#000"></div>
<svg style="left:0;top:28px" width="361" height="4"><pattern id="ck" width="4" height="4" patternUnits="userSpaceOnUse"><rect width="4" height="4" fill="#fff"/><path d="M1 0h1v1h-1z M0 1h1v1h-1z M2 1h1v1h-1z M3 2h1v1h-1z M0 3h1v1h-1z M2 3h1v1h-1z" fill="#000"/></pattern><rect width="361" height="4" fill="url(#ck)"/></svg></div>
<div style="left:877px;top:143px;width:150px;height:37px;border:5px solid #ed1c24"></div>

<svg class="ic" style="left:15px;top:86px;background:linear-gradient(90deg,#3a8ccc,#5cc8dc)" width="20" height="20" viewBox="0 0 20 20"><rect x="0.5" y="0.5" width="19" height="19" fill="none" stroke="#2c58b0" stroke-opacity="0.9"/><path d="M2.5 3 V13.5 M2.5 4.5 H6 M2.5 7 H5.5 V11.5 H7.5 M5.5 9.5 H7.5 M2.5 13.5 H5 L5.5 16.3 H7.5" fill="none" stroke="#30323a" stroke-width="1.25"/><path d="M9 4.5 H16 M11 9.5 H18 M11 11.5 H18 M11 16.3 H18" stroke="#4d6270" stroke-width="0.8"/><path d="M9 7 H16 M9 13.6 H16" stroke="#5a8aa0" stroke-width="1.2"/><rect x="6.8" y="4" width="1.2" height="1.1" fill="#3048e0"/><rect x="6.8" y="6.3" width="1.2" height="1.5" fill="#20e040"/><rect x="8.8" y="9" width="1.2" height="1.1" fill="#3048e0"/><rect x="8.7" y="10.8" width="1.4" height="1.3" fill="#10f020"/><rect x="6.8" y="13" width="1.2" height="1.3" fill="#d02040"/><rect x="8.8" y="15.6" width="1.2" height="1.4" fill="#e8d030"/></svg><svg class="ic" style="left:415px;top:86px;background:linear-gradient(90deg,#3a8ccc,#5cc8dc)" width="20" height="20" viewBox="0 0 20 20"><rect x="0.5" y="0.5" width="19" height="19" fill="none" stroke="#2c58b0" stroke-opacity="0.9"/><path d="M2.5 3 V13.5 M2.5 4.5 H6 M2.5 7 H5.5 V11.5 H7.5 M5.5 9.5 H7.5 M2.5 13.5 H5 L5.5 16.3 H7.5" fill="none" stroke="#30323a" stroke-width="1.25"/><path d="M9 4.5 H16 M11 9.5 H18 M11 11.5 H18 M11 16.3 H18" stroke="#4d6270" stroke-width="0.8"/><path d="M9 7 H16 M9 13.6 H16" stroke="#5a8aa0" stroke-width="1.2"/><rect x="6.8" y="4" width="1.2" height="1.1" fill="#3048e0"/><rect x="6.8" y="6.3" width="1.2" height="1.5" fill="#20e040"/><rect x="8.8" y="9" width="1.2" height="1.1" fill="#3048e0"/><rect x="8.7" y="10.8" width="1.4" height="1.3" fill="#10f020"/><rect x="6.8" y="13" width="1.2" height="1.3" fill="#d02040"/><rect x="8.8" y="15.6" width="1.2" height="1.4" fill="#e8d030"/></svg><svg class="ic" style="left:508px;top:87px;background:linear-gradient(90deg,#3a8ccc 20%,#5cc8dc)" width="20" height="20" viewBox="0 0 20 20"><rect x="0.5" y="0.5" width="19" height="19" fill="none" stroke="#2c58b0" stroke-opacity="0.9"/><path d="M4.3 2.2 H13.5 L15.3 4 V17.4 H4.3 Z" fill="#dcecf8"/><path d="M13.5 2.2 L15.3 4 H13.5 Z" fill="#8cc0e8"/><path d="M7 3.5 H12 M7 5.6 H12 M7 7.6 H12 M7 12.5 H12 M7 14.5 H12" stroke="#2a88d8" stroke-width="0.9"/><path d="M7 10 H12" stroke="#80b8e8" stroke-width="1.6"/><path d="M7 16.6 H12" stroke="#a8d0f0" stroke-width="0.9"/><g fill="#f04050"><circle cx="5.5" cy="3.5" r="0.65"/><circle cx="5.5" cy="5.6" r="0.65"/><circle cx="5.5" cy="7.6" r="0.6"/><circle cx="5.5" cy="9.5" r="0.45"/><circle cx="5.5" cy="10.5" r="0.45"/><circle cx="5.5" cy="12.5" r="0.65"/><circle cx="5.5" cy="14.5" r="0.65"/><circle cx="5.5" cy="16.5" r="0.6"/></g></svg><svg class="ic" style="left:815px;top:86px;background:linear-gradient(90deg,#3a8ccc,#5cc8dc)" width="16" height="16" viewBox="0 0 20 20"><rect x="0.5" y="0.5" width="19" height="19" fill="none" stroke="#2c58b0" stroke-opacity="0.9"/><path d="M2.5 3 V13.5 M2.5 4.5 H6 M2.5 7 H5.5 V11.5 H7.5 M5.5 9.5 H7.5 M2.5 13.5 H5 L5.5 16.3 H7.5" fill="none" stroke="#30323a" stroke-width="1.25"/><path d="M9 4.5 H16 M11 9.5 H18 M11 11.5 H18 M11 16.3 H18" stroke="#4d6270" stroke-width="0.8"/><path d="M9 7 H16 M9 13.6 H16" stroke="#5a8aa0" stroke-width="1.2"/><rect x="6.8" y="4" width="1.2" height="1.1" fill="#3048e0"/><rect x="6.8" y="6.3" width="1.2" height="1.5" fill="#20e040"/><rect x="8.8" y="9" width="1.2" height="1.1" fill="#3048e0"/><rect x="8.7" y="10.8" width="1.4" height="1.3" fill="#10f020"/><rect x="6.8" y="13" width="1.2" height="1.3" fill="#d02040"/><rect x="8.8" y="15.6" width="1.2" height="1.4" fill="#e8d030"/></svg><svg class="ic" style="left:923px;top:87px;background:linear-gradient(90deg,#3a8ccc,#50c0e8 50%,#5cc8dc)" width="16" height="16" viewBox="0 0 16 16"><rect x="0.5" y="0.5" width="15" height="15" fill="none" stroke="#2c58b0" stroke-opacity="0.9"/><path d="M8.4 1.5 V14.5 M5.8 1.6 H11 M5.8 14.4 H11" stroke="#223450" stroke-width="0.9" fill="none"/><rect x="5.7" y="4.9" width="5.4" height="3.3" fill="#ff1800"/><rect x="5.7" y="8.2" width="5.4" height="3.5" fill="#c81000"/><rect x="5.7" y="9.8" width="5.4" height="1.9" fill="#e41400"/></svg><svg class="ic" style="left:1015px;top:87px;background:linear-gradient(90deg,#3a8ccc,#5cc8dc)" width="16" height="16" viewBox="0 0 16 16"><rect x="0.5" y="0.5" width="15" height="15" fill="none" stroke="#2c58b0" stroke-opacity="0.9"/><circle cx="7.8" cy="8.3" r="4.3" fill="none" stroke="#de1c30" stroke-width="2.6"/><circle cx="7.8" cy="8.3" r="5.9" fill="none" stroke="#de1c30" stroke-width="1.3" stroke-dasharray="1.9 1.1" stroke-dashoffset="0.6" opacity="0.9"/><path d="M10.4 6.2 L14.4 11 L11 10.6 Z" fill="#d4607c" opacity="0.9"/></svg>
<!-- side tabs -->
<div style="left:1173px;top:55px;width:1px;height:733px;background:#b9b9b9"></div>
<div class="stab off" style="left:1173px;top:147px;width:22px;height:83px"></div>
<div class="stab off" style="left:1173px;top:229px;width:21px;height:68px"></div>
<div class="stab on" style="left:1172px;top:55px;width:24px;height:93px"></div>
<span class="vt" style="left:1192.5px;top:67px">System View</span>
<span class="vt" style="left:1191.6px;top:160px">Topologies</span>
<span class="vt" style="left:1191px;top:241.6px">General</span>
<i class="dot" style="left:399px;top:415px"></i><i class="dot" style="left:399px;top:418px"></i><i class="dot" style="left:399px;top:421px"></i><i class="dot" style="left:399px;top:424px"></i><i class="dot" style="left:399px;top:427px"></i><i class="dot" style="left:399px;top:430px"></i><i class="dot" style="left:799px;top:415px"></i><i class="dot" style="left:799px;top:418px"></i><i class="dot" style="left:799px;top:421px"></i><i class="dot" style="left:799px;top:424px"></i><i class="dot" style="left:799px;top:427px"></i><i class="dot" style="left:799px;top:430px"></i><i class="dot" style="left:980px;top:723px"></i><i class="dot" style="left:983px;top:723px"></i><i class="dot" style="left:986px;top:723px"></i><i class="dot" style="left:989px;top:723px"></i><i class="dot" style="left:992px;top:723px"></i><i class="dot" style="left:995px;top:723px"></i>
<!-- colour bar + status -->
<div style="left:1px;top:790px;width:1195px;height:20px;background:linear-gradient(90deg,#0000ff 0.00%,#003bff 1.25%,#0061ff 2.50%,#009dff 5.00%,#00d0ff 7.50%,#00ffff 10.00%,#00ffda 12.50%,#00ff9e 15.00%,#00ff55 17.50%,#00ff00 20.00%,#3bff00 21.25%,#61ff00 22.50%,#9dff00 25.00%,#d0ff00 27.50%,#ffff00 30.00%,#fff500 37.00%,#ffe400 44.00%,#ffd000 51.00%,#ffb800 58.00%,#ff9e00 65.00%,#ff8200 72.00%,#ff6400 79.00%,#ff4400 86.00%,#ff2300 93.00%,#ff0000 100.00%)"></div>
<span style="left:1px;top:819px">Ready</span>
</div></body></html>
